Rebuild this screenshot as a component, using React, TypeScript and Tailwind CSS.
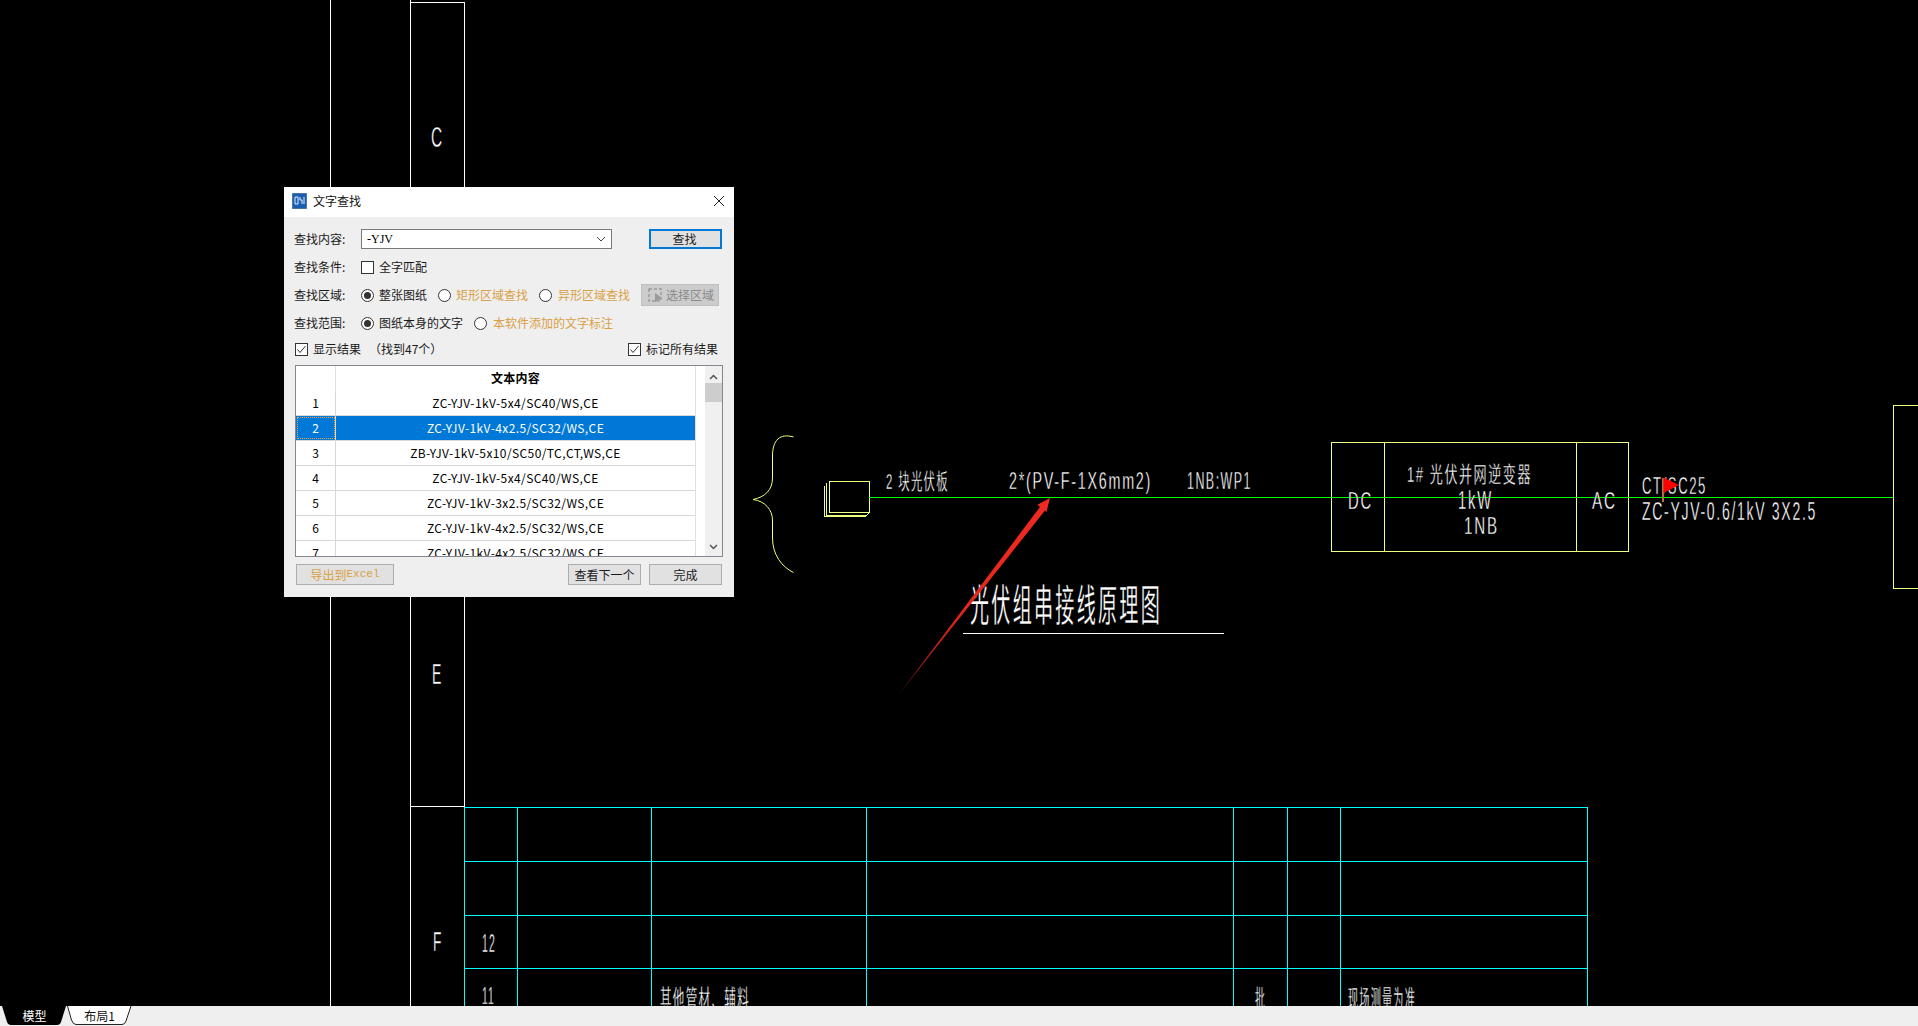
import type { ReactNode } from "react";

const ROWS = [
  "ZC-YJV-1kV-5x4/SC40/WS,CE",
  "ZC-YJV-1kV-4x2.5/SC32/WS,CE",
  "ZB-YJV-1kV-5x10/SC50/TC,CT,WS,CE",
  "ZC-YJV-1kV-5x4/SC40/WS,CE",
  "ZC-YJV-1kV-3x2.5/SC32/WS,CE",
  "ZC-YJV-1kV-4x2.5/SC32/WS,CE",
  "ZC-YJV-1kV-4x2.5/SC32/WS,CE",
];

// CAD 图纸里的细长文字: 黑色描边压在字上,让笔画变细
function CadText({ x, w, y, size, children }: { x: number; w: number; y: number; size: number; children: string }) {
  return (
    <text
      x={x}
      y={y}
      fontSize={size}
      textLength={w}
      lengthAdjust="spacingAndGlyphs"
      letterSpacing={size * 0.12}
      fill="#ffffff"
      stroke="#000000"
      strokeWidth={0.35}
      className="font-['Liberation_Sans','Noto_Sans_CJK_SC',sans-serif]"
    >
      {children}
    </text>
  );
}

function Drawing() {
  return (
    <svg className="absolute inset-0 w-full h-full" viewBox="0 0 1918 1006">
      <defs>
        <linearGradient id="arrow" gradientUnits="userSpaceOnUse" x1="896" y1="698" x2="1050" y2="498">
          <stop offset="0" stopColor="#3a0808" />
          <stop offset="0.15" stopColor="#a01a14" />
          <stop offset="0.45" stopColor="#e8261e" />
          <stop offset="1" stopColor="#f02a22" />
        </linearGradient>
      </defs>

      {/* 图框 */}
      <g stroke="#ffffff" strokeWidth="1" fill="none" shapeRendering="crispEdges">
        <path d="M330.5 0V1006M410.5 0V1006M464.5 2V806M410 2.5H465M410 806.5H465" />
      </g>
      <CadText x={431} w={13} y={147} size={29}>C</CadText>
      <CadText x={432} w={11} y={684} size={30}>E</CadText>
      <CadText x={433} w={10} y={951} size={28}>F</CadText>

      {/* 材料表 */}
      <g stroke="#00ffff" strokeWidth="1" fill="none" shapeRendering="crispEdges">
        <path d="M465 807.5H1588M465 861.5H1588M465 915.5H1588M465 968.5H1588" />
        <path d="M464.5 807V1006M517.5 807V1006M651.5 807V1006M866.5 807V1006M1233.5 807V1006M1287.5 807V1006M1340.5 807V1006M1587.5 807V1006" />
      </g>
      <CadText x={482} w={14} y={952} size={25}>12</CadText>
      <CadText x={482} w={13} y={1004} size={24}>11</CadText>
      <CadText x={660} w={90} y={1008} size={25}>其他管材、辅料</CadText>
      <CadText x={1255} w={11} y={1008} size={25}>批</CadText>
      <CadText x={1348} w={68} y={1008} size={25}>现场测量为准</CadText>

      {/* 光伏组串 */}
      <g stroke="#f0ff80" strokeWidth="1" fill="none">
        <path d="M793.5 437C780 433 772.5 440 772.5 456V478C772.5 490 765 497 753 499.5C765 501 772.5 510 772.5 520V538C772.5 555 782 567 793.5 572.5" />
        <path d="M829.5 481.5H869.5V512.5H829.5ZM826.5 483V515.5H866.5L869.5 512.5M824.5 486V516.5H864.5L866.5 515.5" shapeRendering="crispEdges" />
      </g>
      <rect x="869" y="497" width="1024" height="1" fill="#00ff00" />
      <CadText x={886} w={63} y={489} size={22}>2 块光伏板</CadText>
      <CadText x={1009} w={143} y={489} size={24}>2*(PV-F-1X6mm2)</CadText>
      <CadText x={1187} w={65} y={489} size={24}>1NB:WP1</CadText>
      <CadText x={970} w={192} y={621} size={43}>光伏组串接线原理图</CadText>
      <path d="M963 633.5H1224" stroke="#ffffff" strokeWidth="1" shapeRendering="crispEdges" />
      <polygon points="896,698 1040,507 1037.5,504.7 1050,498 1046.4,512.3 1045,510.5" fill="url(#arrow)" />

      {/* 逆变器 */}
      <g stroke="#f0ff80" strokeWidth="1" fill="none" shapeRendering="crispEdges">
        <path d="M1331.5 442.5H1628.5V551.5H1331.5ZM1384.5 442V552M1576.5 442V552" />
        <path d="M1918 405.5H1893.5V588.5H1918" />
      </g>
      <CadText x={1348} w={25} y={509} size={24}>DC</CadText>
      <CadText x={1592} w={25} y={509} size={24}>AC</CadText>
      <CadText x={1407} w={125} y={482} size={22}>1# 光伏并网逆变器</CadText>
      <CadText x={1458} w={35} y={509} size={25}>1kW</CadText>
      <CadText x={1464} w={35} y={534} size={24}>1NB</CadText>
      <CadText x={1642} w={65} y={494} size={24}>CT/SC25</CadText>
      <CadText x={1642} w={175} y={520} size={25}>ZC-YJV-0.6/1kV 3X2.5</CadText>

      {/* 定位旗标 */}
      <rect x="1662" y="478" width="2" height="24" fill="#a9763c" />
      <polygon points="1663.5,477.5 1679,485 1663.5,493" fill="#ff0000" />
    </svg>
  );
}

function Radio({ checked }: { checked?: boolean }) {
  return (
    <span className="w-[13px] h-[13px] rounded-full border border-[#333333] bg-white flex items-center justify-center shrink-0">
      {checked && <span className="w-[7px] h-[7px] rounded-full bg-[#333333]" />}
    </span>
  );
}

function Check({ checked }: { checked?: boolean }) {
  return (
    <span className="w-[13px] h-[13px] border border-[#333333] bg-white flex items-center justify-center shrink-0">
      {checked && (
        <svg width="11" height="11" viewBox="0 0 11 11" fill="none" stroke="#333333" strokeWidth="1">
          <path d="M1.5 5.5L4 8.5L9.5 2" />
        </svg>
      )}
    </span>
  );
}

function Btn({ className, children }: { className: string; children: ReactNode }) {
  return (
    <button className={`h-[21px] bg-[#e1e1e1] border border-[#adadad] flex items-center justify-center ${className}`}>
      {children}
    </button>
  );
}

function ResultTable() {
  return (
    <div className="mt-[6px] w-[428px] h-[192px] border border-[#828790] bg-white flex overflow-hidden">
      <div className="w-[400px] shrink-0 border-r border-[#e0e0e0]">
        <div className="flex h-[25px] font-bold text-black text-[12px]">
          <div className="w-[40px] border-r border-[#e0e0e0]" />
          <div className="flex-1 flex items-center justify-center pb-[2px] tracking-[0.3px]">文本内容</div>
        </div>
        {ROWS.map((row, i) => {
          const selected = i === 1;
          return (
            <div key={i} className="flex h-[25px] border-b border-[#d8d8d8] text-[12px] text-black">
              <div className={`w-[40px] border-r border-[#d8d8d8] flex items-center justify-center ${selected ? "bg-[#0078d7] text-white outline-1 outline-dotted outline-[#f0a040] -outline-offset-2" : ""}`}>
                {i + 1}
              </div>
              <div className={`flex-1 flex items-center justify-center tracking-[0.4px] ${selected ? "bg-[#0078d7] text-white" : ""}`}>{row}</div>
            </div>
          );
        })}
      </div>
      <div className="w-[9px] shrink-0" />
      <div className="w-[17px] shrink-0 bg-[#f0f0f0] flex flex-col items-center relative">
        <svg className="mt-[8px]" width="9" height="6" viewBox="0 0 9 6" fill="none" stroke="#555555" strokeWidth="1.5">
          <path d="M1 5L4.5 1.5L8 5" />
        </svg>
        <div className="mt-[3px] w-full h-[19px] bg-[#cdcdcd]" />
        <svg className="absolute bottom-[6px]" width="9" height="6" viewBox="0 0 9 6" fill="none" stroke="#555555" strokeWidth="1.5">
          <path d="M1 1L4.5 4.5L8 1" />
        </svg>
      </div>
    </div>
  );
}

function FindDialog() {
  return (
    <div className="absolute left-[284px] top-[187px] w-[450px] h-[410px] bg-[#efefef] text-[12px] text-[#1a1a1a]">
      {/* 标题栏 */}
      <div className="h-[30px] bg-white flex items-center pl-[8px] pr-[10px] pb-[3px]">
        <svg width="15" height="16" viewBox="0 0 15 16" className="shrink-0">
          <rect x="0" y="0" width="15" height="16" rx="1" fill="#1c5fb0" stroke="#7d8a99" />
          <path d="M3 4H6V11H3ZM8 4V7H10V11M12 4V11" stroke="#dfeeff" fill="none" />
        </svg>
        <span className="ml-[6px] text-[#111111]">文字查找</span>
        <svg className="ml-auto" width="10" height="10" viewBox="0 0 10 10" stroke="#222222" strokeWidth="1">
          <path d="M0 0L10 10M10 0L0 10" />
        </svg>
      </div>

      <div className="pl-[11px]">
        <div className="mt-[12px] h-[20px] flex items-center">
          <span className="w-[66px] -ml-[1px] mr-[1px]">查找内容:</span>
          <div className="w-[251px] h-[20px] border border-[#7a7a7a] bg-white flex items-center pl-[5px] pr-[5px]">
            <span className="font-['Liberation_Serif',serif] text-[12px] text-black">-YJV</span>
            <svg className="ml-auto" width="10" height="6" viewBox="0 0 10 6" fill="none" stroke="#444444">
              <path d="M1 1L5 5L9 1" />
            </svg>
          </div>
          <button className="ml-[37px] w-[73px] h-[20px] bg-[#e1e1e1] border-2 border-[#0078d7] flex items-center justify-center pr-[2px]">查找</button>
        </div>

        <div className="mt-[8px] h-[20px] flex items-center">
          <span className="w-[66px] -ml-[1px] mr-[1px]">查找条件:</span>
          <Check />
          <span className="ml-[5px]">全字匹配</span>
        </div>

        <div className="mt-[7px] h-[22px] flex items-center">
          <span className="w-[66px] -ml-[1px] mr-[1px]">查找区域:</span>
          <Radio checked />
          <span className="ml-[5px]">整张图纸</span>
          <span className="ml-[11px]"><Radio /></span>
          <span className="ml-[5px] text-[#d9a045]">矩形区域查找</span>
          <span className="ml-[11px]"><Radio /></span>
          <span className="ml-[6px] text-[#d9a045]">异形区域查找</span>
          <div className="ml-[11px] w-[78px] h-[22px] bg-[#cccccc] border border-[#bfbfbf] flex items-center pl-[6px] text-[#8a8a8a]">
            <svg width="15" height="15" viewBox="0 0 15 15" className="shrink-0" fill="none">
              <rect x="1" y="1" width="12" height="12" stroke="#9a9a9a" strokeWidth="1.5" strokeDasharray="3 2" />
              <polygon points="7,5 14,10 7,14" fill="#9a9a9a" />
            </svg>
            <span className="ml-[3px]">选择区域</span>
          </div>
        </div>

        <div className="mt-[7px] h-[20px] flex items-center">
          <span className="w-[66px] -ml-[1px] mr-[1px]">查找范围:</span>
          <Radio checked />
          <span className="ml-[5px]">图纸本身的文字</span>
          <span className="ml-[11px]"><Radio /></span>
          <span className="ml-[6px] text-[#d9a045]">本软件添加的文字标注</span>
        </div>

        <div className="mt-[6px] h-[20px] flex items-center w-[428px]">
          <Check checked />
          <span className="ml-[5px]">显示结果</span>
          <span className="ml-[8px]">（找到47个）</span>
          <span className="ml-auto mr-[5px] flex items-center">
            <Check checked />
            <span className="ml-[5px]">标记所有结果</span>
          </span>
        </div>

        <ResultTable />

        <div className="mt-[7px] w-[427px] flex items-center">
          <Btn className="ml-[1px] w-[98px] text-[#d9a045]">
            导出到<span className="font-['Liberation_Mono',monospace] text-[11px]">Excel</span>
          </Btn>
          <Btn className="ml-auto w-[73px]">查看下一个</Btn>
          <Btn className="ml-[8px] w-[73px]">完成</Btn>
        </div>
      </div>
    </div>
  );
}

function LayoutTabs() {
  return (
    <div className="h-[20px] bg-[#efefef] flex pl-[2px] text-[12px] shrink-0">
      <div className="relative w-[65px] h-[19px] flex items-center justify-center text-white">
        <svg className="absolute inset-0" width="65" height="19" viewBox="0 0 65 19">
          <path d="M0 0L5 16Q6 19 9 19H55Q58 19 59 16L64 0Z" fill="#000000" />
        </svg>
        <span className="relative">模型</span>
      </div>
      <div className="relative w-[65px] h-[19px] flex items-center justify-center text-[#111111]">
        <svg className="absolute inset-0" width="65" height="19" viewBox="0 0 65 19">
          <path d="M0.5 0L4.5 14Q6 18.5 9 18.5H55Q58 18.5 59 15L64 0Z" fill="#ffffff" />
          <path d="M0.5 0L4.5 14Q6 18.5 9 18.5H55Q58 18.5 59 15L64 0" fill="none" stroke="#222222" />
        </svg>
        <span className="relative">布局1</span>
      </div>
    </div>
  );
}

export default function App() {
  return (
    <div className="w-[1918px] h-[1026px] bg-black flex flex-col overflow-hidden font-['Noto_Sans_CJK_SC',sans-serif]">
      <div className="relative flex-1">
        <Drawing />
        <FindDialog />
      </div>
      <LayoutTabs />
    </div>
  );
}
